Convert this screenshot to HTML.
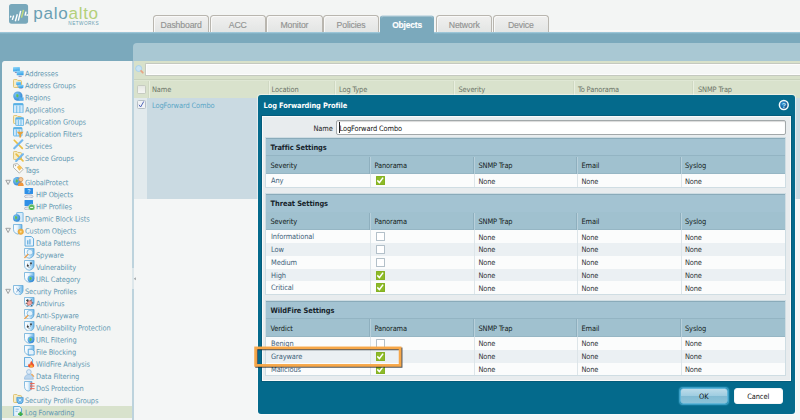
<!DOCTYPE html>
<html><head><meta charset="utf-8"><title>Log Forwarding Profile</title>
<style>
html,body{margin:0;padding:0}
body{letter-spacing:-0.100px;width:800px;height:420px;overflow:hidden;position:relative;background:#7ba9bc;font-family:"DejaVu Sans Condensed","Liberation Sans",sans-serif;font-size:7.400px;color:#333}
.abs,.nv,.sec,.sect,.hrow,.ht,.row,.ct,.cb,.vd,.tab,.th{position:absolute}
#hdr{position:absolute;left:0;top:0;width:800px;height:30.500px;background:#f3f5f4}
#hl1{position:absolute;left:0;top:30px;width:800px;height:2px;background:linear-gradient(#f3f5f4,#fdfdfd 50%,#f3ecea)}
#hl2{position:absolute;left:0;top:32px;width:800px;height:2px;background:linear-gradient(#a9cfe0,#8ab8cb 60%,#7ba9bc)}
.tab{font-family:"Liberation Sans",sans-serif;-webkit-text-stroke:0.150px currentColor;top:15px;height:17px;box-sizing:border-box;border:1px solid #b9b6af;border-bottom:none;border-radius:3.500px 3.500px 0 0;background:#e9ebea;color:#929392;font-size:8.700px;text-align:center;line-height:18.500px;letter-spacing:-0.150px;background:linear-gradient(#f0f0ef,#e3e5e4);box-shadow:inset 1px 1px 0 #f9f9f8}
.tab.on{box-shadow:inset 0 1px 0 #9dbfcd;background:#7ba9bc;border-color:#cfdfe6 #7ba9bc #7ba9bc;color:#fff;font-weight:bold;height:19px;font-size:8.400px;top:15px;line-height:18.500px}
#left{position:absolute;left:2px;top:61px;width:130.300px;height:360px;background:#f3f5f4;border-radius:3px 0 0 0;box-shadow:1px 0 0 #fbfbfb}
#sel{position:absolute;left:2px;top:405.800px;width:130.300px;height:11.800px;background:#d8e2cc}
.nv{transform:rotate(0.050deg);transform-origin:0 50%;color:#5f97b1;font-size:7.400px;line-height:12px;white-space:nowrap;letter-spacing:-0.110px}
#mainhd{position:absolute;left:132.800px;top:42.500px;width:668px;height:19px;background:#a9c8d3;border-radius:4px 0 0 0}
#strip{position:absolute;left:132.300px;top:61px;width:2px;height:360px;background:#bdd3dd}
#srow{position:absolute;left:134px;top:60.700px;width:666px;height:19.600px;background:#d8e1ca;border-bottom:1px solid #c9d3bd;box-sizing:border-box}
#sinp{position:absolute;left:145.300px;top:62.700px;width:655px;height:13.300px;background:#f5f7f6;border:1px solid #c4c9c0;border-right:none;box-sizing:border-box;border-radius:1.500px 0 0 1.500px;box-shadow:inset 1px 1px 0 #fdfdfd,inset 0 -1px 0 #fdfdfd}
#thd{position:absolute;left:134px;top:80px;width:666px;height:18px;background:#d9e2cc;border-top:1px solid #dfe7d4;box-sizing:border-box}
.th{top:85px;color:#6b7468;letter-spacing:-0.120px;font-size:7.400px;line-height:9px;white-space:nowrap}
#selrow{position:absolute;left:134px;top:98px;width:666px;height:100.500px;background:#cadae2}
#selcb{position:absolute;left:134px;top:98px;width:13.200px;height:100.500px;background:#e2eaed}
#white{position:absolute;left:134px;top:198.500px;width:667px;height:225px;background:#f4f6f6}
#dlgsh{position:absolute;left:258px;top:95px;width:537.200px;height:319px;border-radius:3px;box-shadow:0 0 1px 1px rgba(255,255,255,0.55)}
#dlg{position:absolute;left:258px;top:95px;width:537.200px;height:319px;background:#046a8c;border-radius:3px}
#dlgt{position:absolute;left:263.500px;top:101.200px;color:#fff;font-weight:bold;font-size:7.400px;letter-spacing:-0.080px;line-height:10px;white-space:nowrap}
#dlgc{position:absolute;left:262px;top:116px;width:528.800px;height:264.500px;background:#e8ecee;box-sizing:border-box;border:1px solid #fafafa;box-shadow:0 0 0 1px #045c7b}
#nlab{position:absolute;left:300px;width:32.700px;text-align:right;top:123.500px;font-size:7.400px;line-height:9px;color:#222}
#ninp{position:absolute;left:336px;top:120px;width:449.500px;height:14.500px;box-sizing:border-box;border:1px solid #a2a8aa;border-radius:2px;background:#fff;font-size:7.400px;line-height:15.300px;padding-left:2.500px;color:#111;box-shadow:inset 0 1px 1px rgba(0,0,0,0.15)}
.sec{left:266px;width:519px;background:#fafbfb;box-shadow:0 0 0 1px #cfdde3}
.sect{left:270.600px;font-weight:bold;font-size:7.400px;letter-spacing:-0.070px;line-height:10px;color:#17232b;white-space:nowrap}
.sth{position:absolute;left:266px;width:519px;height:18.300px;background:#a3c3d2;border-top:1px solid #8aabba;border-bottom:1px solid #93b4c3;box-sizing:border-box}
.hrow{left:266px;width:519px;height:18.200px;background:#a0c1cf;border-top:none;border-bottom:1px solid #96b6c4;box-sizing:border-box}
.ht{font-size:7.400px;line-height:9px;color:#141c20;letter-spacing:-0.120px;white-space:nowrap}
.row{left:266px;width:519px;height:12.750px;background:#fbfcfc}
.row.alt{background:#ebf0f3}
.ct{font-size:7.400px;line-height:9px;color:#2e3336;white-space:nowrap}
.nm{color:#3f627a !important}
.cb{width:9.300px;height:9px;box-sizing:border-box;border:1px solid #b3c0c9;background:#fff;border-radius:0.500px}
.cb.on{background:#8dba28;border-color:#84b122}
.cb svg{position:absolute;left:-1px;top:-1px}
.vd{width:1px;background:#dde5e9}
.vh{position:absolute;width:1px;background:#8eafbe;box-shadow:1px 0 0 #b8d0db}
.btn{position:absolute;top:387.800px;height:16.200px;box-sizing:border-box;border-radius:3px;font-size:7.400px;line-height:15.500px;text-align:center;color:#111}
</style></head><body>
<svg width="0" height="0" style="position:absolute"><defs><linearGradient id="gs" x1="0" y1="0" x2="1" y2="0"><stop offset="0" stop-color="#ffffff"/><stop offset="0.450" stop-color="#e8f4fc"/><stop offset="1" stop-color="#62b2e8"/></linearGradient><linearGradient id="gm" x1="0" y1="0" x2="0.300" y2="1"><stop offset="0" stop-color="#9bdcfa"/><stop offset="1" stop-color="#3aa4e8"/></linearGradient><radialGradient id="gg" cx="0.350" cy="0.350" r="0.800"><stop offset="0" stop-color="#7cc4f4"/><stop offset="1" stop-color="#2a7fcc"/></radialGradient></defs></svg>
<div id="hdr"></div><div id="hl1"></div><div id="hl2"></div>
<!-- logo -->
<svg class="abs" style="left:9px;top:4px" width="20" height="20" viewBox="0 0 20 20">
<rect x="0" y="0.100" width="19.100" height="19.600" rx="2.600" fill="#78a8bb"/>
<g stroke="#fff" stroke-width="1.400">
<path d="M1.330 13.570L2 11.770M3.330 15.900L4.670 11.570M6.330 17.200L8.330 10.200M9.330 16.600L11.670 6.900M16 11.570L17 7.570M18 11.900L18.500 10.200"/>
</g>
<path d="M12.470 13.570L14.470 5.900" stroke="#c3dc7c" stroke-width="1.500"/>
</svg>
<div class="abs" style="left:33.300px;top:2.500px;font-family:'Liberation Sans',sans-serif;font-size:17.100px;line-height:22px;letter-spacing:0.700px;white-space:nowrap;color:#6a9fb3"><span>palo</span><span style="color:#b3d07a">alto</span></div>
<div class="abs" style="left:68.300px;top:20.600px;font-family:'Liberation Sans',sans-serif;font-size:4.700px;line-height:5px;letter-spacing:0.450px;color:#6a9fb3;white-space:nowrap">NETWORKS</div>
<!-- tabs -->
<div class="tab" style="left:153.00px;width:56.400px">Dashboard</div>
<div class="tab" style="left:209.60px;width:56.400px">ACC</div>
<div class="tab" style="left:266.20px;width:56.400px">Monitor</div>
<div class="tab" style="left:322.80px;width:56.400px">Policies</div>
<div class="tab on" style="left:380px;width:54.200px">Objects</div>
<div class="tab" style="left:436.00px;width:56.400px">Network</div>
<div class="tab" style="left:492.60px;width:56.400px">Device</div>
<!-- left nav -->
<div id="left"></div><div id="sel"></div>
<svg class="abs" style="left:13px;top:66.57px" width="10.600" height="10.600" viewBox="0 0 10 10"><rect x="0" y="0" width="6.5" height="4.2" rx="0.500" fill="url(#gm)"/><rect x="1.75" y="4.7" width="3" height="0.900" fill="#8a8ab8"/><rect x="3.5" y="3.6" width="6.5" height="4.2" rx="0.500" fill="url(#gm)"/><rect x="5.25" y="8.3" width="3" height="0.900" fill="#8a8ab8"/></svg>
<div class="nv" style="left:25px;top:68px;transform:translateY(0.14px) rotate(0.05deg)">Addresses</div>
<svg class="abs" style="left:13px;top:78.68px" width="10.600" height="10.600" viewBox="0 0 10 10"><path d="M0.400 1.400q0-1 1-1h2.200l1 1h2.400q1 0 1 1v4.600q0 1-1 1h-5.600q-1 0-1-1z" fill="#f7ecc4" stroke="#d9b95c" stroke-width="0.800"/><rect x="3" y="2.6" width="4.5" height="3" rx="0.500" fill="url(#gm)"/><rect x="3.75" y="6.1" width="3" height="0.900" fill="#8a8ab8"/><rect x="5" y="5.4" width="4.8" height="3" rx="0.500" fill="url(#gm)"/><rect x="5.9" y="8.9" width="3" height="0.900" fill="#8a8ab8"/></svg>
<div class="nv" style="left:25px;top:80px;transform:translateY(0.25px) rotate(0.05deg)">Address Groups</div>
<svg class="abs" style="left:13px;top:90.79px" width="10.600" height="10.600" viewBox="0 0 10 10"><circle cx="4.6" cy="4.8" r="4.4" fill="url(#gg)"/><path d="M4.6 4.8m-1.300 -1.900l1.700 0.500 0.300 1.300-1.100 1.500-1.100-1z" fill="#62c050"/><rect x="5.400" y="6" width="4.600" height="3.200" fill="#52b0ee"/><rect x="6.600" y="9.300" width="2.400" height="0.700" fill="#8a8ab8"/></svg>
<div class="nv" style="left:25px;top:92px;transform:translateY(0.36px) rotate(0.05deg)">Regions</div>
<svg class="abs" style="left:13px;top:102.90px" width="10.600" height="10.600" viewBox="0 0 10 10"><rect x="0.5" y="0.5" width="9" height="9" rx="0.600" fill="#d2eafa" stroke="#58b0e4" stroke-width="0.800"/><rect x="0.5" y="0.5" width="9" height="1.600" fill="#58b0e4"/><path d="M3.5 2.5v7M6.5 2.5v7" stroke="#6cbcec" stroke-width="0.900"/></svg>
<div class="nv" style="left:25px;top:104px;transform:translateY(0.47px) rotate(0.05deg)">Applications</div>
<svg class="abs" style="left:13px;top:115.01px" width="10.600" height="10.600" viewBox="0 0 10 10"><path d="M0.400 1.400q0-1 1-1h2.200l1 1h2.400q1 0 1 1v4.600q0 1-1 1h-5.600q-1 0-1-1z" fill="#f7ecc4" stroke="#d9b95c" stroke-width="0.800"/><rect x="2.6" y="2.6" width="7.4" height="7.4" rx="0.600" fill="#d2eafa" stroke="#58b0e4" stroke-width="0.800"/><rect x="2.6" y="2.6" width="7.4" height="1.600" fill="#58b0e4"/><path d="M5.066666666666666 4.6v5.4M7.533333333333333 4.6v5.4" stroke="#6cbcec" stroke-width="0.900"/></svg>
<div class="nv" style="left:25px;top:116px;transform:translateY(0.58px) rotate(0.05deg)">Application Groups</div>
<svg class="abs" style="left:13px;top:127.12px" width="10.600" height="10.600" viewBox="0 0 10 10"><rect x="0.5" y="0.5" width="8" height="8" rx="0.600" fill="#d2eafa" stroke="#58b0e4" stroke-width="0.800"/><rect x="0.5" y="0.5" width="8" height="1.600" fill="#58b0e4"/><path d="M3.1666666666666665 2.5v6M5.833333333333333 2.5v6" stroke="#6cbcec" stroke-width="0.900"/><path d="M3.600 4.600h6.400l-2.400 2.600v2.800h-1.600v-2.800z" fill="#e6a23c"/></svg>
<div class="nv" style="left:25px;top:128px;transform:translateY(0.69px) rotate(0.05deg)">Application Filters</div>
<svg class="abs" style="left:13px;top:139.23px" width="10.600" height="10.600" viewBox="0 0 10 10"><path d="M1.2 1.2l7.6 7.6" stroke="#eabf45" stroke-width="1.600" stroke-linecap="round"/><path d="M8.799999999999999 1.2l-7.6 7.6" stroke="#74b8ee" stroke-width="2" stroke-linecap="round"/></svg>
<div class="nv" style="left:25px;top:140px;transform:translateY(0.80px) rotate(0.05deg)">Services</div>
<svg class="abs" style="left:13px;top:151.34px" width="10.600" height="10.600" viewBox="0 0 10 10"><path d="M0.400 1.400q0-1 1-1h2.200l1 1h2.400q1 0 1 1v4.600q0 1-1 1h-5.600q-1 0-1-1z" fill="#f7ecc4" stroke="#d9b95c" stroke-width="0.800"/><path d="M3 3l6.4 6.4" stroke="#eabf45" stroke-width="1.600" stroke-linecap="round"/><path d="M9.4 3l-6.4 6.4" stroke="#74b8ee" stroke-width="2" stroke-linecap="round"/></svg>
<div class="nv" style="left:25px;top:152px;transform:translateY(0.91px) rotate(0.05deg)">Service Groups</div>
<svg class="abs" style="left:13px;top:163.45px" width="10.600" height="10.600" viewBox="0 0 10 10"><path d="M0.600 1.200l3.400-0.600 5.600 5.400-3.600 3.600-5.600-5.400z" fill="#fbfbf8" stroke="#a9a9a0" stroke-width="0.800"/><path d="M3.600 3.800l2.600-1.800 2.600 2.600-2.800 2.800z" fill="#f6c25a"/><circle cx="2.400" cy="2.400" r="0.600" fill="#999"/></svg>
<div class="nv" style="left:25px;top:165px;transform:translateY(0.02px) rotate(0.05deg)">Tags</div>
<svg class="abs" style="left:4.800px;top:178.56px" width="7" height="7" viewBox="0 0 7 7"><path d="M0.800 1.300h4.600l-2.300 4.200z" fill="#eef0f0" stroke="#8d8f90" stroke-width="0.800"/></svg>
<svg class="abs" style="left:13px;top:175.56px" width="10.600" height="10.600" viewBox="0 0 10 10"><circle cx="4" cy="5" r="4" fill="url(#gg)"/><path d="M4 5m-1.300 -1.900l1.700 0.500 0.300 1.300-1.100 1.500-1.100-1z" fill="#62c050"/><circle cx="7.400" cy="3.300" r="2" fill="#f3c79a" stroke="#d98a3a" stroke-width="0.600"/><path d="M4.600 10c0-3 1.400-4 2.800-4s2.800 1 2.800 4z" fill="#f0953a"/></svg>
<div class="nv" style="left:25px;top:177px;transform:translateY(0.13px) rotate(0.05deg)">GlobalProtect</div>
<svg class="abs" style="left:24px;top:187.67px" width="10.600" height="10.600" viewBox="0 0 10 10"><rect x="0.500" y="0" width="8" height="5.600" rx="0.500" fill="#2f8fe6"/><text x="4.500" y="4.800" font-size="5" font-weight="bold" fill="#cfe8ff" text-anchor="middle" font-family="Liberation Sans, sans-serif">?</text><ellipse cx="4.500" cy="8" rx="4" ry="1.700" fill="#e6e8ee" stroke="#9da3b4" stroke-width="0.700"/></svg>
<div class="nv" style="left:35.7px;top:189px;transform:translateY(0.24px) rotate(0.05deg)">HIP Objects</div>
<svg class="abs" style="left:24px;top:199.78px" width="10.600" height="10.600" viewBox="0 0 10 10"><rect x="0.500" y="0" width="8" height="5.600" rx="0.500" fill="#2f8fe6"/><ellipse cx="3.500" cy="8" rx="3.200" ry="1.500" fill="#e6e8ee" stroke="#9da3b4" stroke-width="0.700"/><circle cx="7.200" cy="7" r="3" fill="#5cb85c" stroke="#d9f0d9" stroke-width="0.600"/><path d="M5.800 7h2.800" stroke="#fff" stroke-width="0.900"/></svg>
<div class="nv" style="left:35.7px;top:201px;transform:translateY(0.35px) rotate(0.05deg)">HIP Profiles</div>
<svg class="abs" style="left:13px;top:211.89px" width="10.600" height="10.600" viewBox="0 0 10 10"><rect x="3.500" y="0.400" width="6" height="9.200" rx="0.500" fill="#d4eafa" stroke="#62aee0" stroke-width="0.800"/><circle cx="3.4" cy="5.6" r="3.4" fill="url(#gg)"/><path d="M3.4 5.6m-1.300 -1.900l1.700 0.500 0.300 1.300-1.100 1.500-1.100-1z" fill="#62c050"/></svg>
<div class="nv" style="left:25px;top:213px;transform:translateY(0.46px) rotate(0.05deg)">Dynamic Block Lists</div>
<svg class="abs" style="left:4.800px;top:227.00px" width="7" height="7" viewBox="0 0 7 7"><path d="M0.800 1.300h4.600l-2.300 4.200z" fill="#eef0f0" stroke="#8d8f90" stroke-width="0.800"/></svg>
<svg class="abs" style="left:13px;top:224.00px" width="10.600" height="10.600" viewBox="0 0 10 10"><path d="M0.500 0.500h8v4.500c0 3-2 4-4 4.500c-2-.5-4-1.500-4-4.500z" fill="url(#gs)" stroke="#5ea6d6" stroke-width="0.700"/><circle cx="7.300" cy="7.300" r="2.600" fill="#f2b340" stroke="#e09a28" stroke-width="0.500"/><circle cx="7.300" cy="7.300" r="0.900" fill="#fbe2a4"/></svg>
<div class="nv" style="left:25px;top:225px;transform:translateY(0.57px) rotate(0.05deg)">Custom Objects</div>
<svg class="abs" style="left:24px;top:236.11px" width="10.600" height="10.600" viewBox="0 0 10 10"><path d="M1 0.5h6l2 2v7h-8z" fill="#e6f2fb" stroke="#4b9fd8" stroke-width="0.800"/><path d="M3.600 4v4M5.600 3v5" stroke="#4b9fd8" stroke-width="1"/></svg>
<div class="nv" style="left:35.7px;top:237px;transform:translateY(0.68px) rotate(0.05deg)">Data Patterns</div>
<svg class="abs" style="left:24px;top:248.22px" width="10.600" height="10.600" viewBox="0 0 10 10"><path d="M0.500 0.500h9v4.500c0 3-2.300 4.200-4.500 4.700c-2.200-.5-4.500-1.700-4.500-4.700z" fill="url(#gs)" stroke="#5ea6d6" stroke-width="0.700"/><circle cx="5.600" cy="4" r="2.700" fill="#e4f3fc" stroke="#8cc0e4" stroke-width="0.900"/><path d="M3.600 6.200l-2.800 2.800" stroke="#e8a050" stroke-width="1.300" stroke-linecap="round"/></svg>
<div class="nv" style="left:35.7px;top:249px;transform:translateY(0.79px) rotate(0.05deg)">Spyware</div>
<svg class="abs" style="left:24px;top:260.33px" width="10.600" height="10.600" viewBox="0 0 10 10"><path d="M0.500 0.500h9v4.500c0 3-2.300 4.200-4.500 4.700c-2.200-.5-4.500-1.700-4.500-4.700z" fill="url(#gs)" stroke="#5ea6d6" stroke-width="0.700"/><circle cx="3.600" cy="5.400" r="1" fill="#3a3a3a"/><circle cx="6.600" cy="3" r="0.900" fill="#3a3a3a"/><path d="M3 3.800l0.800 0.600M6 4.800l0.800-0.600M4.600 7l0.600 0.600" stroke="#3a3a3a" stroke-width="0.800"/></svg>
<div class="nv" style="left:35.7px;top:261px;transform:translateY(0.90px) rotate(0.05deg)">Vulnerability</div>
<svg class="abs" style="left:24px;top:272.44px" width="10.600" height="10.600" viewBox="0 0 10 10"><path d="M0.500 0.500h9v4.500c0 3-2.300 4.200-4.500 4.700c-2.200-.5-4.500-1.700-4.500-4.700z" fill="url(#gs)" stroke="#5ea6d6" stroke-width="0.700"/><circle cx="6.6" cy="6.4" r="3.2" fill="url(#gg)"/><path d="M6.6 6.4m-1.300 -1.900l1.700 0.500 0.300 1.300-1.100 1.500-1.100-1z" fill="#62c050"/></svg>
<div class="nv" style="left:35.7px;top:274px;transform:translateY(0.01px) rotate(0.05deg)">URL Category</div>
<svg class="abs" style="left:4.800px;top:287.55px" width="7" height="7" viewBox="0 0 7 7"><path d="M0.800 1.300h4.600l-2.300 4.200z" fill="#eef0f0" stroke="#8d8f90" stroke-width="0.800"/></svg>
<svg class="abs" style="left:13px;top:284.55px" width="10.600" height="10.600" viewBox="0 0 10 10"><path d="M0.500 0.500h9v4.500c0 3-2.300 4.200-4.500 4.700c-2.200-.5-4.500-1.700-4.500-4.700z" fill="url(#gs)" stroke="#5ea6d6" stroke-width="0.700"/><path d="M3.200 3l3.600 3.600M6.800 3l-3.600 3.600" stroke="#5a8fc0" stroke-width="0.900"/></svg>
<div class="nv" style="left:25px;top:286px;transform:translateY(0.12px) rotate(0.05deg)">Security Profiles</div>
<svg class="abs" style="left:24px;top:296.66px" width="10.600" height="10.600" viewBox="0 0 10 10"><path d="M0.500 0.500h9v4.500c0 3-2.300 4.200-4.500 4.700c-2.200-.5-4.500-1.700-4.500-4.700z" fill="url(#gs)" stroke="#5ea6d6" stroke-width="0.700"/><ellipse cx="5.200" cy="5.600" rx="2.500" ry="2" fill="#f4a6a0" stroke="#c9605a" stroke-width="0.500" transform="rotate(-30 5.200 5.600)"/><path d="M2 3l1.600 1.400M1.600 6h1.600M3 9l1-1.400M7 2.400l-0.600 1.600M8.800 5.600h-1.400M7.600 8.800l-0.800-1.400" stroke="#333" stroke-width="0.700"/><circle cx="3.400" cy="3.200" r="1" fill="#444"/></svg>
<div class="nv" style="left:35.7px;top:298px;transform:translateY(0.23px) rotate(0.05deg)">Antivirus</div>
<svg class="abs" style="left:24px;top:308.77px" width="10.600" height="10.600" viewBox="0 0 10 10"><path d="M0.500 0.500h9v4.500c0 3-2.300 4.200-4.500 4.700c-2.200-.5-4.500-1.700-4.500-4.700z" fill="url(#gs)" stroke="#5ea6d6" stroke-width="0.700"/><circle cx="5.600" cy="4" r="2.700" fill="#e4f3fc" stroke="#8cc0e4" stroke-width="0.900"/><path d="M3.600 6.200l-2.800 2.800" stroke="#e8a050" stroke-width="1.300" stroke-linecap="round"/></svg>
<div class="nv" style="left:35.7px;top:310px;transform:translateY(0.34px) rotate(0.05deg)">Anti-Spyware</div>
<svg class="abs" style="left:24px;top:320.88px" width="10.600" height="10.600" viewBox="0 0 10 10"><path d="M0.500 0.500h9v4.500c0 3-2.300 4.200-4.500 4.700c-2.200-.5-4.500-1.700-4.500-4.700z" fill="url(#gs)" stroke="#5ea6d6" stroke-width="0.700"/><circle cx="3.600" cy="5.400" r="1" fill="#3a3a3a"/><circle cx="6.600" cy="3" r="0.900" fill="#3a3a3a"/><path d="M3 3.800l0.800 0.600M6 4.800l0.800-0.600M4.600 7l0.600 0.600" stroke="#3a3a3a" stroke-width="0.800"/></svg>
<div class="nv" style="left:35.7px;top:322px;transform:translateY(0.45px) rotate(0.05deg)">Vulnerability Protection</div>
<svg class="abs" style="left:24px;top:332.99px" width="10.600" height="10.600" viewBox="0 0 10 10"><path d="M0.500 0.500h9v4.500c0 3-2.300 4.200-4.500 4.700c-2.200-.5-4.500-1.700-4.500-4.700z" fill="url(#gs)" stroke="#5ea6d6" stroke-width="0.700"/><circle cx="6.6" cy="6.4" r="3.2" fill="url(#gg)"/><path d="M6.6 6.4m-1.300 -1.900l1.700 0.500 0.300 1.300-1.100 1.500-1.100-1z" fill="#62c050"/></svg>
<div class="nv" style="left:35.7px;top:334px;transform:translateY(0.56px) rotate(0.05deg)">URL Filtering</div>
<svg class="abs" style="left:24px;top:345.10px" width="10.600" height="10.600" viewBox="0 0 10 10"><path d="M0.500 0.500h9v4.500c0 3-2.300 4.200-4.500 4.700c-2.200-.5-4.500-1.700-4.500-4.700z" fill="url(#gs)" stroke="#5ea6d6" stroke-width="0.700"/><path d="M4 4h3.6l2 2v3.4h-5.6z" fill="#e6f2fb" stroke="#4b9fd8" stroke-width="0.800"/></svg>
<div class="nv" style="left:35.7px;top:346px;transform:translateY(0.67px) rotate(0.05deg)">File Blocking</div>
<svg class="abs" style="left:24px;top:357.21px" width="10.600" height="10.600" viewBox="0 0 10 10"><path d="M0.5 0.4h5.6l2 2v6.6h-7.6z" fill="#e6f2fb" stroke="#4b9fd8" stroke-width="0.800"/><path d="M6.800 10c-3.600 0-3.400-2.600-1.800-4.200 0 1 .6 1.400 1 1.200-.4-1.200.2-2.600 1.200-3.400 0 2 2.800 3 2.400 5-.2 1-1.200 1.400-2.800 1.400z" fill="#f0552a"/><path d="M6.900 9.800c-1.400 0-1.600-1.200-.7-2.200.2.800.9.400.9-.6.800.8 1.500 1.500 1.200 2.200-.2.400-.7.600-1.400.6z" fill="#fbb03b"/></svg>
<div class="nv" style="left:35.7px;top:358px;transform:translateY(0.78px) rotate(0.05deg)">WildFire Analysis</div>
<svg class="abs" style="left:24px;top:369.32px" width="10.600" height="10.600" viewBox="0 0 10 10"><circle cx="4.600" cy="2.800" r="2.200" fill="#dcebf8" stroke="#8fb6dc" stroke-width="0.700"/><path d="M0.400 9.600c0-3 1.600-4.400 4.200-4.400s4.200 1.400 4.200 4.400z" fill="#bcd6ee" stroke="#8fb6dc" stroke-width="0.600"/><path d="M7 4.600l2.400 2.600" stroke="#e8a050" stroke-width="1.200"/></svg>
<div class="nv" style="left:35.7px;top:370px;transform:translateY(0.89px) rotate(0.05deg)">Data Filtering</div>
<svg class="abs" style="left:24px;top:381.43px" width="10.600" height="10.600" viewBox="0 0 10 10"><path d="M0.500 0.500h7v4.500c0 3-1.500 4-3.500 4.500c-2-.5-3.500-1.500-3.500-4.500z" fill="url(#gs)" stroke="#5ea6d6" stroke-width="0.700"/><path d="M6 2.400h4M6 4.800h4M6 7.200h4" stroke="#f0604a" stroke-width="0.900"/><path d="M7.200 1.400l-1.400 1 1.400 1M7.200 3.800l-1.400 1 1.400 1M7.200 6.200l-1.400 1 1.400 1" stroke="#f0604a" stroke-width="0.700" fill="none"/></svg>
<div class="nv" style="left:35.7px;top:383px;transform:translateY(0.00px) rotate(0.05deg)">DoS Protection</div>
<svg class="abs" style="left:13px;top:393.54px" width="10.600" height="10.600" viewBox="0 0 10 10"><path d="M0.400 1.400q0-1 1-1h2.200l1 1h2.400q1 0 1 1v4.600q0 1-1 1h-5.600q-1 0-1-1z" fill="#f7ecc4" stroke="#d9b95c" stroke-width="0.800"/><path d="M3.600 3.200h6v3c0 2-1.500 3-3 3.500c-1.500-.5-3-1.500-3-3.500z" fill="#6cb6ea" stroke="#3b8fd0" stroke-width="0.600"/><path d="M5.400 4.600l2.400 2.400M7.800 4.600l-2.400 2.400" stroke="#fff" stroke-width="0.700"/></svg>
<div class="nv" style="left:25px;top:395px;transform:translateY(0.11px) rotate(0.05deg)">Security Profile Groups</div>
<svg class="abs" style="left:13px;top:405.65px" width="10.600" height="10.600" viewBox="0 0 10 10"><path d="M0.6 0.4h5.4l2 2v7.4h-7.4z" fill="#e6f2fb" stroke="#4b9fd8" stroke-width="0.800"/><path d="M2.400 3h3M2.400 5h2" stroke="#7ab6e2" stroke-width="0.800"/><path d="M7 5.400v4.400M4.800 7.600h4.400" stroke="#3dae49" stroke-width="1.700"/></svg>
<div class="nv" style="left:25px;top:407px;transform:translateY(0.22px) rotate(0.05deg)">Log Forwarding</div>
<!-- main -->
<div id="mainhd"></div><div id="strip"></div>
<div id="srow"></div><div id="sinp"></div>
<svg class="abs" style="left:135px;top:63.500px" width="10" height="11" viewBox="0 0 10 11"><circle cx="3.700" cy="4.500" r="3" fill="#c8e3f4" stroke="#a6cfec" stroke-width="0.900"/><path d="M6.100 6.900l1.700 1.800" stroke="#e9a585" stroke-width="1.800" stroke-linecap="round"/></svg>
<div id="thd"></div>
<div class="abs" style="left:136.500px;top:84.500px;width:9px;height:9px;box-sizing:border-box;border:1px solid #c6cbc1;background:linear-gradient(#e6e8e3,#f5f6f3);border-radius:1.500px"></div>
<div class="th" style="left:152px">Name</div>
<div class="th" style="left:271.500px">Location</div>
<div class="th" style="left:339px">Log Type</div>
<div class="th" style="left:458.500px">Severity</div>
<div class="th" style="left:578px">To Panorama</div>
<div class="th" style="left:698px">SNMP Trap</div>
<div class="vd" style="left:147.500px;top:80.500px;height:17.500px;background:#d0d9c3;box-shadow:1px 0 0 #e9efdf"></div>
<div class="vd" style="left:267.500px;top:80.500px;height:17.500px;background:#d0d9c3;box-shadow:1px 0 0 #e9efdf"></div>
<div class="vd" style="left:333.500px;top:80.500px;height:17.500px;background:#d0d9c3;box-shadow:1px 0 0 #e9efdf"></div>
<div class="vd" style="left:453px;top:80.500px;height:17.500px;background:#d0d9c3;box-shadow:1px 0 0 #e9efdf"></div>
<div class="vd" style="left:572.500px;top:80.500px;height:17.500px;background:#d0d9c3;box-shadow:1px 0 0 #e9efdf"></div>
<div class="vd" style="left:692px;top:80.500px;height:17.500px;background:#d0d9c3;box-shadow:1px 0 0 #e9efdf"></div>
<div id="selrow"></div><div id="selcb"></div>
<div class="abs" style="left:136.500px;top:100.300px;width:9px;height:9px;box-sizing:border-box;border:1px solid #b7c0c6;background:#f1f3f5;border-radius:1.500px"><svg style="position:absolute;left:-1px;top:-1px" width="9" height="9" viewBox="0 0 9 9"><path d="M2 4.800l1.600 2.200 3.200-5.600" stroke="#4b60b6" stroke-width="0.950" fill="none"/></svg></div>
<div class="abs" style="left:152px;top:101px;color:#5aa6c6;font-size:7.400px;line-height:9px;white-space:nowrap">LogForward Combo</div>
<div id="white"></div>
<div class="abs" style="left:132.300px;top:267.500px;width:2px;height:21.500px;background:#dde7eb"></div><svg class="abs" style="left:132.500px;top:277px" width="4" height="4" viewBox="0 0 4 4"><path d="M2.800 0.300v3l-2-1.500z" fill="#9a9fa2"/></svg>
<!-- dialog -->
<div id="dlgsh"></div><div id="dlg"></div>
<div id="dlgt">Log Forwarding Profile</div>
<svg class="abs" style="left:778px;top:99px" width="12" height="12" viewBox="0 0 12 12"><defs><radialGradient id="gh" cx="0.400" cy="0.350" r="0.700"><stop offset="0" stop-color="#2f8fd0"/><stop offset="1" stop-color="#0b4c86"/></radialGradient></defs><circle cx="5.800" cy="6" r="4.400" fill="url(#gh)" stroke="#f4fafc" stroke-width="1.500"/><text x="5.800" y="8.500" font-size="7" font-weight="bold" fill="#c4e8f8" text-anchor="middle" font-family="Liberation Sans, sans-serif">?</text></svg>
<div id="dlgc"></div>
<div id="nlab">Name</div>
<div id="ninp">LogForward Combo</div><div class="abs" style="left:338.800px;top:122px;width:1px;height:11px;background:#222"></div>
<div class="sec" style="top:138.2px;height:48.75px"></div>
<div class="sth" style="top:138.2px"></div>
<div class="sect" style="top:143.00px">Traffic Settings</div>
<div class="hrow" style="top:156.00px"></div>
<div class="ht" style="left:270.5px;top:161.00px">Severity</div>
<div class="ht" style="left:374.5px;top:161.00px">Panorama</div>
<div class="ht" style="left:478.5px;top:161.00px">SNMP Trap</div>
<div class="ht" style="left:581.5px;top:161.00px">Email</div>
<div class="ht" style="left:685.0px;top:161.00px">Syslog</div>
<div class="row " style="top:174.20px"></div>
<div class="ct nm" style="left:271px;top:176.20px">Any</div>
<div class="ct" style="left:478.4px;top:176.50px">None</div>
<div class="ct" style="left:581.4px;top:176.50px">None</div>
<div class="ct" style="left:684.9px;top:176.50px">None</div>
<div class="cb on" style="left:376px;top:176.20px"><svg width="9" height="9" viewBox="0 0 9 9"><path d="M1.300 4.400l2.100 2.100 3.700-4.900" stroke="#fff" stroke-width="1.500" fill="none"/></svg></div>
<div class="vd" style="left:370px;top:174.20px;height:12.75px"></div>
<div class="vh" style="left:369.4px;top:156.50px;height:17.70px"></div>
<div class="vd" style="left:474px;top:174.20px;height:12.75px"></div>
<div class="vh" style="left:473.4px;top:156.50px;height:17.70px"></div>
<div class="vd" style="left:577px;top:174.20px;height:12.75px"></div>
<div class="vh" style="left:576.4px;top:156.50px;height:17.70px"></div>
<div class="vd" style="left:680.5px;top:174.20px;height:12.75px"></div>
<div class="vh" style="left:679.9px;top:156.50px;height:17.70px"></div>
<div class="sec" style="top:194.4px;height:99.75px"></div>
<div class="sth" style="top:194.4px"></div>
<div class="sect" style="top:199.20px">Threat Settings</div>
<div class="hrow" style="top:212.20px"></div>
<div class="ht" style="left:270.5px;top:217.20px">Severity</div>
<div class="ht" style="left:374.5px;top:217.20px">Panorama</div>
<div class="ht" style="left:478.5px;top:217.20px">SNMP Trap</div>
<div class="ht" style="left:581.5px;top:217.20px">Email</div>
<div class="ht" style="left:685.0px;top:217.20px">Syslog</div>
<div class="row " style="top:230.40px"></div>
<div class="ct nm" style="left:271px;top:232.40px">Informational</div>
<div class="ct" style="left:478.4px;top:232.70px">None</div>
<div class="ct" style="left:581.4px;top:232.70px">None</div>
<div class="ct" style="left:684.9px;top:232.70px">None</div>
<div class="cb" style="left:376px;top:232.40px"></div>
<div class="row alt" style="top:243.15px"></div>
<div class="ct nm" style="left:271px;top:245.15px">Low</div>
<div class="ct" style="left:478.4px;top:245.45px">None</div>
<div class="ct" style="left:581.4px;top:245.45px">None</div>
<div class="ct" style="left:684.9px;top:245.45px">None</div>
<div class="cb" style="left:376px;top:245.15px"></div>
<div class="row " style="top:255.90px"></div>
<div class="ct nm" style="left:271px;top:257.90px">Medium</div>
<div class="ct" style="left:478.4px;top:258.20px">None</div>
<div class="ct" style="left:581.4px;top:258.20px">None</div>
<div class="ct" style="left:684.9px;top:258.20px">None</div>
<div class="cb" style="left:376px;top:257.90px"></div>
<div class="row alt" style="top:268.65px"></div>
<div class="ct nm" style="left:271px;top:270.65px">High</div>
<div class="ct" style="left:478.4px;top:270.95px">None</div>
<div class="ct" style="left:581.4px;top:270.95px">None</div>
<div class="ct" style="left:684.9px;top:270.95px">None</div>
<div class="cb on" style="left:376px;top:270.65px"><svg width="9" height="9" viewBox="0 0 9 9"><path d="M1.300 4.400l2.100 2.100 3.700-4.900" stroke="#fff" stroke-width="1.500" fill="none"/></svg></div>
<div class="row " style="top:281.40px"></div>
<div class="ct nm" style="left:271px;top:283.40px">Critical</div>
<div class="ct" style="left:478.4px;top:283.70px">None</div>
<div class="ct" style="left:581.4px;top:283.70px">None</div>
<div class="ct" style="left:684.9px;top:283.70px">None</div>
<div class="cb on" style="left:376px;top:283.40px"><svg width="9" height="9" viewBox="0 0 9 9"><path d="M1.300 4.400l2.100 2.100 3.700-4.900" stroke="#fff" stroke-width="1.500" fill="none"/></svg></div>
<div class="vd" style="left:370px;top:230.40px;height:63.75px"></div>
<div class="vh" style="left:369.4px;top:212.70px;height:17.70px"></div>
<div class="vd" style="left:474px;top:230.40px;height:63.75px"></div>
<div class="vh" style="left:473.4px;top:212.70px;height:17.70px"></div>
<div class="vd" style="left:577px;top:230.40px;height:63.75px"></div>
<div class="vh" style="left:576.4px;top:212.70px;height:17.70px"></div>
<div class="vd" style="left:680.5px;top:230.40px;height:63.75px"></div>
<div class="vh" style="left:679.9px;top:212.70px;height:17.70px"></div>
<div class="sec" style="top:301px;height:74.25px"></div>
<div class="sth" style="top:301px"></div>
<div class="sect" style="top:305.80px">WildFire Settings</div>
<div class="hrow" style="top:318.80px"></div>
<div class="ht" style="left:270.5px;top:323.80px">Verdict</div>
<div class="ht" style="left:374.5px;top:323.80px">Panorama</div>
<div class="ht" style="left:478.5px;top:323.80px">SNMP Trap</div>
<div class="ht" style="left:581.5px;top:323.80px">Email</div>
<div class="ht" style="left:685.0px;top:323.80px">Syslog</div>
<div class="row " style="top:337.00px"></div>
<div class="ct nm" style="left:271px;top:339.00px">Benign</div>
<div class="ct" style="left:478.4px;top:339.30px">None</div>
<div class="ct" style="left:581.4px;top:339.30px">None</div>
<div class="ct" style="left:684.9px;top:339.30px">None</div>
<div class="cb" style="left:376px;top:339.00px"></div>
<div class="row alt" style="top:349.75px"></div>
<div class="ct nm" style="left:271px;top:351.75px">Grayware</div>
<div class="ct" style="left:478.4px;top:352.05px">None</div>
<div class="ct" style="left:581.4px;top:352.05px">None</div>
<div class="ct" style="left:684.9px;top:352.05px">None</div>
<div class="cb on" style="left:376px;top:351.75px"><svg width="9" height="9" viewBox="0 0 9 9"><path d="M1.300 4.400l2.100 2.100 3.700-4.900" stroke="#fff" stroke-width="1.500" fill="none"/></svg></div>
<div class="row " style="top:362.50px"></div>
<div class="ct nm" style="left:271px;top:364.50px">Malicious</div>
<div class="ct" style="left:478.4px;top:364.80px">None</div>
<div class="ct" style="left:581.4px;top:364.80px">None</div>
<div class="ct" style="left:684.9px;top:364.80px">None</div>
<div class="cb on" style="left:376px;top:364.50px"><svg width="9" height="9" viewBox="0 0 9 9"><path d="M1.300 4.400l2.100 2.100 3.700-4.900" stroke="#fff" stroke-width="1.500" fill="none"/></svg></div>
<div class="vd" style="left:370px;top:337.00px;height:38.25px"></div>
<div class="vh" style="left:369.4px;top:319.30px;height:17.70px"></div>
<div class="vd" style="left:474px;top:337.00px;height:38.25px"></div>
<div class="vh" style="left:473.4px;top:319.30px;height:17.70px"></div>
<div class="vd" style="left:577px;top:337.00px;height:38.25px"></div>
<div class="vh" style="left:576.4px;top:319.30px;height:17.70px"></div>
<div class="vd" style="left:680.5px;top:337.00px;height:38.25px"></div>
<div class="vh" style="left:679.9px;top:319.30px;height:17.70px"></div>
<!-- highlight -->
<svg class="abs" style="left:250px;top:342px;filter:drop-shadow(1.300px 1.400px 0.700px rgba(20,30,40,0.750))" width="160" height="32" viewBox="0 0 160 32"><rect x="5.600" y="5.900" width="144.500" height="17.500" fill="none" stroke="#f7a748" stroke-width="2.700"/></svg>
<!-- buttons -->
<div class="btn" style="left:680px;width:47.500px;background:linear-gradient(#bddcea,#9fcde1 48%,#82bbd3 52%,#8cc3d9);border:1px solid #62b6d8;box-shadow:0 0 1.500px 1px #48add4">OK</div>
<div class="btn" style="left:733.700px;width:49px;background:#fff;border:1px solid #f4f7f8">Cancel</div>
</body></html>
